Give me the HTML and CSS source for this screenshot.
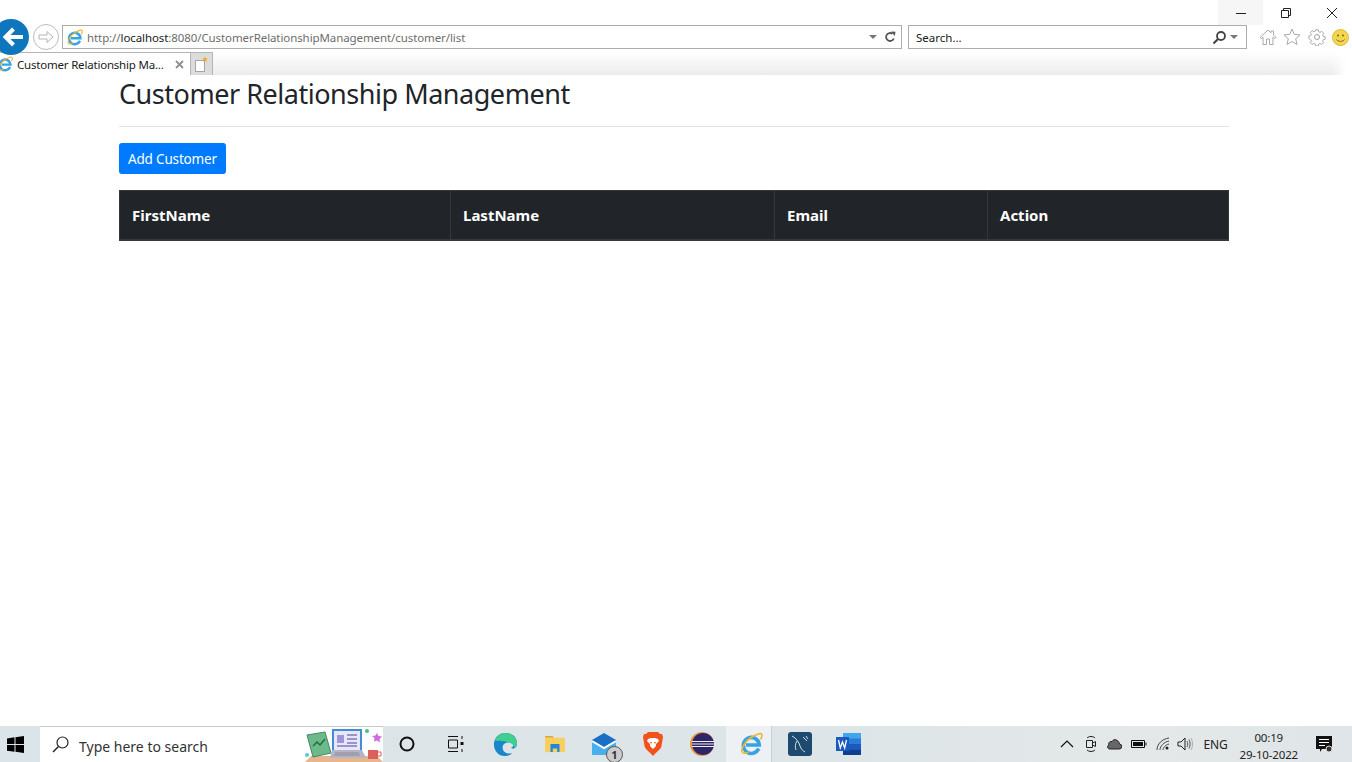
FILE: index.html
```html
<!DOCTYPE html>
<html lang="en">
<head>
    <meta charset="UTF-8">
    <meta name="viewport" content="width=device-width, initial-scale=1.0">
    <title>Customer Relationship Management</title>
    <link rel="stylesheet" href="styles.css">
</head>
<body>
    <svg class="defs" width="0" height="0">
        <symbol id="ie" viewBox="0 0 24 24">
            <path d="M19.700 16.500a8 8 0 1 1 .6-3.500H7" stroke="#37a3e4" stroke-width="3.600" fill="none"/>
            <path d="M3.500 20.500C1 18 6 9 12 5.500S22 .5 22.800 2.500c.5 1.500-.3 3.500-1.300 5" stroke="#f0b62e" stroke-width="1.600" fill="none"/>
            <path d="M3.500 20.500c1 1 3.500.8 6-.5" stroke="#f0b62e" stroke-width="1.600" fill="none"/>
        </symbol>
    </svg>

    <header class="browser">
        <div class="title-row">
            <div class="win-btn win-hover">
                <svg width="12" height="12" viewBox="0 0 12 12"><path d="M1 6.500h10" stroke="#222" fill="none"/></svg>
            </div>
            <div class="win-btn">
                <svg width="12" height="12" viewBox="0 0 12 12"><path d="M1.500 3.500h7v7h-7z M3.500 3.500v-2h7v7h-2" stroke="#222" fill="none"/></svg>
            </div>
            <div class="win-btn win-close">
                <svg width="12" height="12" viewBox="0 0 12 12"><path d="M1 1l10 10M11 1L1 11" stroke="#222" fill="none"/></svg>
            </div>
        </div>

        <div class="back-btn">
            <svg width="24" height="22" viewBox="0 0 24 22"><path d="M21 11H4M11.500 3L3.500 11l8 8" stroke="#fff" stroke-width="4" fill="none"/></svg>
        </div>
        <div class="forward-btn">
            <svg width="16" height="14" viewBox="0 0 16 14"><path d="M1 5h8V1.500L15 7l-6 5.500V9H1z" stroke="#b4b4b4" fill="none"/></svg>
        </div>

        <div class="address-row">
            <div class="address-bar">
                <svg class="ie-small" width="17" height="17"><use href="#ie"/></svg>
                <span class="url">http://<b>localhost</b>:8080/CustomerRelationshipManagement/customer/list</span>
                <span class="caret"></span>
                <svg class="refresh" width="12" height="12" viewBox="0 0 12 12"><path d="M9.800 7.500A4 4 0 1 1 8.500 2.800" stroke="#555" stroke-width="1.800" fill="none"/><path d="M7 .5l4.500.3-.7 4.300z" fill="#555"/></svg>
            </div>
            <div class="search-bar">
                <span class="search-text">Search...</span>
                <svg width="15" height="15" viewBox="0 0 15 15"><circle cx="9" cy="6" r="4" stroke="#444" stroke-width="1.800" fill="none"/><path d="M6 9l-4.500 4.500" stroke="#444" stroke-width="2.200"/></svg>
                <span class="caret"></span>
            </div>
            <div class="tools">
                <svg width="18" height="18" viewBox="0 0 18 18"><path d="M1 9.500L9 2l3 2.800V3h2.500v4l2.500 2.500-1.500 1L14 9v7.500h-3.500V11h-3v5.500H4V9l-1.500 1.500z" stroke="#a9a9a9" fill="#fff"/></svg>
                <svg width="18" height="18" viewBox="0 0 18 18"><path d="M9 1l2.300 5.400 5.700.5-4.300 3.800 1.300 5.800L9 13.500l-5 3 1.300-5.800L1 6.900l5.700-.5z" stroke="#a9a9a9" fill="#fff"/></svg>
                <svg class="tool-gear" width="18" height="18" viewBox="0 0 18 18"><circle cx="9" cy="9" r="2.500" stroke="#a0a0a0" fill="none"/><path d="M7.500 1h3l.4 2.200 1.500.7 2-1.200 2 2.100-1.200 1.900.7 1.500 2.100.4v2.800l-2.100.5-.7 1.500 1.200 1.900-2 2-2-1.200-1.500.7-.4 2.200h-3l-.4-2.200-1.500-.7-2 1.200-2-2 1.200-1.900-.7-1.500L0 10.600V7.800l2.100-.4.700-1.500-1.200-1.900 2-2.100 2 1.200 1.500-.7z" transform="translate(.9 .9) scale(.9)" stroke="#a0a0a0" fill="none"/></svg>
                <svg width="17" height="17" viewBox="0 0 17 17"><circle cx="8.500" cy="8.500" r="8" fill="#f3d54e" stroke="#d9b93c"/><circle cx="6" cy="6.500" r="1" fill="#7a6a20"/><circle cx="11" cy="6.500" r="1" fill="#7a6a20"/><path d="M4.500 10.500c1.500 2.500 6.500 2.500 8 0" stroke="#7a6a20" fill="none"/></svg>
            </div>
        </div>

        <div class="tab-row">
            <div class="tab">
                <svg class="ie-tab" width="16" height="16"><use href="#ie"/></svg>
                <span class="tab-title">Customer Relationship Ma...</span>
                <svg class="tab-close" width="9" height="9" viewBox="0 0 9 9"><path d="M1 1l7 7M8 1L1 8" stroke="#8f8f8f" stroke-width="1.800"/></svg>
            </div>
            <div class="new-tab">
                <svg width="15" height="17" viewBox="0 0 15 17"><path d="M1.500 4.500h9v11h-9z" fill="#fff" stroke="#a5a5a5"/><path d="M11 .5l.8 1.800 1.900.2-1.400 1.300.4 1.900-1.700-1-1.700 1 .4-1.900L8.300 2.500l1.900-.2z" fill="#f5a623"/></svg>
            </div>
        </div>
    </header>

    <main class="page">
        <h3 class="page-title">Customer Relationship Management</h3>
        <hr class="divider">
        <a class="btn-add">Add Customer</a>
        <table class="customers">
            <thead>
                <tr>
                    <th class="col-first">FirstName</th>
                    <th class="col-last">LastName</th>
                    <th class="col-email">Email</th>
                    <th class="col-action">Action</th>
                </tr>
            </thead>
        </table>
    </main>

    <footer class="taskbar">
        <div class="start">
            <svg width="17" height="17" viewBox="0 0 17 17"><path d="M0 2.400l7.500-1.100v6.800H0z M8.500 1.200L17 0v8.100H8.500z M0 9.100h7.500v6.700L0 14.700z M8.500 9.100H17V17l-8.500-1.200z" fill="#000"/></svg>
        </div>
        <div class="task-search">
            <svg class="search-glass" width="17" height="17" viewBox="0 0 17 17"><circle cx="10.500" cy="6.500" r="5.500" stroke="#222" stroke-width="1.200" fill="none"/><path d="M6.500 10.500L1 16" stroke="#222" stroke-width="1.400"/></svg>
            <span class="task-search-text">Type here to search</span>
            <svg class="search-art" width="78" height="35" viewBox="0 0 78 35">
                <path d="M0 35l6-6h66l6 6z" fill="#e6b78f"/>
                <path d="M2 8l18-3 6 21-18 4z" fill="#6eb98a" stroke="#3f8a63"/>
                <path d="M8 19l4-4 3 3 5-6" stroke="#1f6e3e" stroke-width="1.500" fill="none"/>
                <path d="M27 2h30v21H27z" fill="#3f8fd8"/>
                <path d="M29 4h26v19H29z" fill="#e8e6f7"/>
                <path d="M32 8h7v8h-7z" fill="#9c97d8"/>
                <path d="M42 8h10M42 12h10M42 16h10M32 19h20" stroke="#7f7bc4" stroke-width="1.500"/>
                <path d="M27 23h30l4 8H25z" fill="#b4b4c4"/>
                <path d="M30 26h24M29 28h26" stroke="#8b8b9c"/>
                <path d="M63 23h10v9H63z" fill="#d9605c"/>
                <path d="M73 25h3v4h-3" stroke="#d9605c" fill="none"/>
                <circle cx="62" cy="4" r="2" fill="#43c47a"/>
                <path d="M72 6l1.500 3 3.500.5-2.500 2.500.5 3.500-3-2-3 1 .5-3.500-2.500-2 3.500-.5z" fill="#d06be0"/>
                <circle cx="2" cy="28" r="2" fill="#59c6d8"/>
            </svg>
        </div>

        <div class="task-icons">
            <div class="task-icon task-cortana">
                <svg width="16" height="16" viewBox="0 0 16 16"><circle cx="8" cy="8" r="6.500" stroke="#111" stroke-width="2" fill="none"/></svg>
            </div>
            <div class="task-icon task-view">
                <svg width="18" height="18" viewBox="0 0 18 18"><path d="M2 1.500h10M2 16.500h10M2.500 5h9v8h-9zM16 1v3M16 14v3" stroke="#111" fill="none"/><path d="M14.500 7h3v3h-3z" fill="#111"/></svg>
            </div>
            <div class="task-icon">
                <svg width="25" height="25" viewBox="0 0 26 26">
                    <path d="M13 1C6 1 1 6 1 13c0 7 5 12 11 12 3 0 6-1 8-3-5 1-10-1-10-6 0-3 3-5 6-5 3 0 5 1 5 3 0 1-1 2-2 2 0 2 6 2 6-4C25 5 20 1 13 1z" fill="#1b86c9"/>
                    <path d="M2 9C4 4 8 1 13 1c7 0 12 5 12 11 0 2-1 4-3 5 1-2-1-4-3-5-5-3-13-3-17-3z" fill="#3fcf8e"/>
                </svg>
            </div>
            <div class="task-icon">
                <svg width="22" height="18" viewBox="0 0 24 20"><path d="M1 1h8l2 2H1z" fill="#d9a72e"/><path d="M1 3h22v16H1z" fill="#f8cf5c"/><path d="M7 10h10v9h-2.500v-4h-5v4H7z" fill="#1f88d8"/></svg>
            </div>
            <div class="task-icon task-mail">
                <svg width="24" height="22" viewBox="0 0 24 22"><path d="M0 7l12-7 12 7v15H0z" fill="#1a6fc4"/><path d="M0 9l12 7 12-7v13H0z" fill="#46b0ee"/><path d="M0 8l12 7 12-7" stroke="#fff" stroke-width="2" fill="none"/></svg>
                <span class="mail-badge">1</span>
            </div>
            <div class="task-icon">
                <svg width="20" height="24" viewBox="0 0 20 24"><path d="M5 0h10l2 2h2l1 3-1.500 9c-.5 3-6 7-8.500 10-2.500-3-8-7-8.500-10L0 5l1-3h2z" fill="#f1511b"/><path d="M5 7l3-1h4l3 1 1 2-3 3v2l-3 3-3-3v-2L4 9z" fill="#fff"/><path d="M7 10h2l-1 2zM13 10h-2l1 2z" fill="#f1511b"/></svg>
            </div>
            <div class="task-icon">
                <svg width="24" height="24" viewBox="0 0 24 24"><circle cx="12" cy="12" r="12" fill="#e8963a"/><circle cx="13" cy="12" r="11" fill="#2f2569"/><path d="M2 9.500h22M2 12h22M2 14.500h22" stroke="#eee" stroke-width="1.200"/></svg>
            </div>
            <div class="task-icon task-active">
                <svg width="24" height="24"><use href="#ie"/></svg>
            </div>
            <div class="task-sep"></div>
            <div class="task-icon">
                <svg width="24" height="24" viewBox="0 0 24 24"><rect width="24" height="24" rx="3" fill="#1d4a6e"/><path d="M4 4c4 2 7 6 8 10 1 3 3 5 5 6M9 9c-2 3-2 6-1 9M18 4l2 3M15 5l4 4" stroke="#d5e2ea" fill="none"/></svg>
            </div>
            <div class="task-icon">
                <svg width="25" height="22" viewBox="0 0 25 22"><path d="M7 0h18v22H7z" fill="#2b7cd3"/><path d="M7 0h18v5.500H7z" fill="#41a5ee"/><path d="M7 11h18v5.500H7z" fill="#185abd"/><path d="M7 16.500h18V22H7z" fill="#103f91"/><path d="M0 4h13v14H0z" fill="#185abd"/><path d="M2.500 7l1.800 8L6.500 9l2.200 6 1.800-8" stroke="#fff" stroke-width="1.300" fill="none"/></svg>
            </div>
        </div>

        <div class="tray">
            <svg class="tray-chevron" width="14" height="8" viewBox="0 0 14 8"><path d="M1 7l6-6 6 6" stroke="#111" stroke-width="1.200" fill="none"/></svg>
            <svg class="tray-meet" width="12" height="18" viewBox="0 0 12 18"><path d="M2 3c2-2 6-2 8 0M2 15c2 2 6 2 8 0" stroke="#222" fill="none"/><path d="M1.500 5.500h6v7h-6zM7.500 8l3-1.500v5l-3-1.500" stroke="#222" fill="none"/></svg>
            <svg class="tray-cloud" width="16" height="12" viewBox="0 0 16 12"><path d="M4 11h9a2.500 2.500 0 0 0 .5-5C13 2 8 0 6 3.500 3 3 2 6 3 7c-2 .5-2 4 1 4z" fill="#666" stroke="#222"/></svg>
            <svg class="tray-battery" width="16" height="10" viewBox="0 0 16 10"><path d="M.5 1.500h13v7H.5z" stroke="#111" fill="none"/><path d="M2 3h10v4H2z" fill="#111"/><path d="M14.500 3.500h1v3h-1z" fill="#111"/></svg>
            <svg class="tray-wifi" width="14" height="14" viewBox="0 0 14 14"><path d="M1 13C1 7 6 2 13 1M4 13c0-4 4-8 9-9M7 13c0-2 2-5 6-6" stroke="#444" fill="none"/><circle cx="11" cy="11" r="1.500" fill="#222"/></svg>
            <svg class="tray-volume" width="16" height="14" viewBox="0 0 16 14"><path d="M1 5h3l4-4v12L4 9H1z" stroke="#222" fill="none"/><path d="M10 4c1 2 1 4 0 6M12 2.500c1.500 3 1.500 6 0 9" stroke="#555" fill="none"/><path d="M14 1c2 4 2 8 0 12" stroke="#aaa" fill="none"/></svg>
            <span class="tray-lang">ENG</span>
            <div class="tray-clock">
                <span>00:19</span>
                <span>29-10-2022</span>
            </div>
            <svg class="tray-notify" width="17" height="17" viewBox="0 0 17 17"><path d="M0 0h16v13H6l-2 3v-3H0z" fill="#111"/><path d="M3 3.500h10M3 6.500h10M3 9.500h6" stroke="#fff"/><circle cx="13" cy="13" r="3" fill="#333" stroke="#ddd"/></svg>
        </div>
    </footer>
</body>
</html>
```

FILE: styles.css
```css
* {
    box-sizing: border-box;
}

html, body {
    height: 100%;
}

body {
    margin: 0;
    display: flex;
    flex-direction: column;
    overflow: hidden;
    background: #fff;
    color: #212529;
    font-family: "Noto Sans", "Open Sans", sans-serif;
}

.defs {
    position: absolute;
}

/* browser chrome */
.browser {
    position: relative;
    height: 75px;
    flex-shrink: 0;
    font-size: 12px;
}

.title-row {
    display: flex;
    justify-content: flex-end;
    height: 25px;
}

.win-btn {
    display: flex;
    align-items: center;
    justify-content: center;
    width: 46px;
    height: 25px;
}

.win-hover {
    width: 45px;
    background: #f6f6f6;
}

.win-close {
    width: 43px;
    padding-left: 3px;
}

.back-btn {
    position: absolute;
    left: -7px;
    top: 19px;
    width: 36px;
    height: 36px;
    padding-left: 5px;
    display: flex;
    align-items: center;
    justify-content: center;
    border-radius: 50%;
    background: #0e76bc;
    z-index: 2;
}

.forward-btn {
    position: absolute;
    left: 33px;
    top: 24px;
    width: 26px;
    height: 26px;
    display: flex;
    align-items: center;
    justify-content: center;
    border-radius: 50%;
    border: 1px solid #bdbdbd;
    background: #fff;
}

.address-row {
    display: flex;
    align-items: center;
    height: 24px;
    padding-left: 62px;
}

.address-bar {
    display: flex;
    align-items: center;
    width: 840px;
    height: 24px;
    padding: 0 5px 0 3px;
    border: 1px solid #adadad;
    background: #fff;
}

.ie-small {
    flex-shrink: 0;
    margin-right: 4px;
}

.url {
    flex: 1;
    color: #6d6d6d;
    font-size: 11.5px;
    letter-spacing: -0.09px;
    white-space: nowrap;
}

.url b {
    font-weight: 400;
    color: #1a1a1a;
}

.caret {
    width: 0;
    height: 0;
    margin: 0 6px;
    border-left: 4px solid transparent;
    border-right: 4px solid transparent;
    border-top: 4px solid #777;
}

.refresh {
    margin-left: 1px;
}

.search-bar {
    display: flex;
    align-items: center;
    width: 339px;
    height: 24px;
    margin-left: 6px;
    padding-left: 7px;
    border: 1px solid #adadad;
    background: #fff;
}

.search-text {
    flex: 1;
    color: #1a1a1a;
    font-size: 11.5px;
}

.search-bar .caret {
    margin: 0 8px 0 3px;
}

.tools {
    display: flex;
    align-items: center;
    gap: 6px;
    margin-left: 12px;
}

.tool-gear {
    margin: 0 0 0 1px;
}

.tab-row {
    display: flex;
    height: 23px;
    margin-top: 3px;
    background:
        linear-gradient(90deg, transparent 1332px, #fff 1346px),
        linear-gradient(#fff, #ececec);
}

.tab {
    display: flex;
    align-items: center;
    width: 191px;
    border-top: 1px solid #b5b5b5;
    border-right: 1px solid #b5b5b5;
    background: #fff;
    overflow: hidden;
}

.ie-tab {
    flex-shrink: 0;
    margin-left: -3px;
    margin-right: 4px;
}

.tab-title {
    flex: 1;
    color: #1a1a1a;
    font-size: 11.5px;
    letter-spacing: -0.2px;
    white-space: nowrap;
}

.tab-close {
    margin-right: 6px;
}

.new-tab {
    display: flex;
    align-items: center;
    justify-content: center;
    width: 22px;
    border-top: 1px solid #b5b5b5;
    border-right: 1px solid #b5b5b5;
    background: #dcdcdc;
}

/* page content */
.page {
    flex: 1;
    width: 1110px;
    margin-left: 119px;
}

.page-title {
    margin: 2px 0 15px;
    font-size: 27px;
    font-weight: 400;
    letter-spacing: -0.47px;
    line-height: 34px;
}

.divider {
    margin: 0 0 16px;
    border: 0;
    border-top: 1px solid #e2e4e6;
}

.btn-add {
    display: inline-block;
    height: 31px;
    padding: 1px 9px 0;
    border-radius: 3px;
    background: #007bff;
    color: #fff;
    font-size: 13.5px;
    letter-spacing: -0.17px;
    line-height: 31px;
}

.customers {
    width: 100%;
    margin-top: 16px;
    border-collapse: collapse;
    table-layout: fixed;
}

.customers th {
    height: 49px;
    padding: 0 12px;
    border: 1px solid #32383e;
    border-bottom-width: 2px;
    background: #212529;
    color: #fff;
    font-size: 15px;
    font-weight: 700;
    text-align: left;
}

.col-first {
    width: 331px;
}

.col-last {
    width: 324px;
}

.col-email {
    width: 213px;
}

/* windows taskbar */
.taskbar {
    display: flex;
    height: 36px;
    flex-shrink: 0;
    background: linear-gradient(90deg, #dbe4e8, #dde5e8 60%, #e4e8e8 85%, #dfe5e8);
}

.start {
    display: flex;
    align-items: center;
    justify-content: center;
    width: 40px;
    padding-right: 10px;
}

.task-search {
    display: flex;
    align-items: center;
    width: 343px;
    padding-left: 12px;
    border-top: 1px solid #c9c9c9;
    background: #fff;
    position: relative;
}

.search-glass {
    margin-right: 10px;
}

.task-search-text {
    flex: 1;
    padding-top: 3px;
    color: #333;
    font-size: 14px;
}

.search-art {
    position: absolute;
    right: 0;
    top: 0;
}

.task-icons {
    display: flex;
    align-items: center;
    height: 100%;
}

.task-icon {
    position: relative;
    display: flex;
    align-items: center;
    justify-content: center;
    width: 49px;
    height: 100%;
}

.task-cortana {
    padding-right: 2px;
}

.task-view {
    padding-right: 3px;
}

.task-active {
    width: 45px;
    padding-left: 5px;
    background: #eef1f3;
}

.task-sep {
    width: 1px;
    height: 100%;
    background: #c6cdd0;
    margin-right: 3px;
}

.mail-badge {
    position: absolute;
    right: 5px;
    bottom: -1px;
    width: 17px;
    height: 17px;
    border: 1px solid #555;
    border-radius: 50%;
    background: #ccc;
    font-size: 11px;
    font-weight: 700;
    line-height: 15px;
    text-align: center;
    color: #333;
}

.tray {
    display: flex;
    align-items: center;
    margin-left: auto;
    padding-right: 19px;
    color: #222;
    font-size: 12px;
}

.tray-chevron {
    margin-right: 11px;
}

.tray-meet {
    margin-right: 9px;
}

.tray-cloud {
    margin-right: 9px;
}

.tray-battery {
    margin-right: 9px;
}

.tray-wifi {
    margin-right: 7px;
}

.tray-volume {
    margin-right: 11px;
}

.tray-lang {
    padding-top: 1px;
    letter-spacing: -0.2px;
}

.tray-clock {
    display: flex;
    flex-direction: column;
    align-items: center;
    margin: 0 18px 0 12px;
    padding-top: 4px;
    font-size: 11.5px;
    letter-spacing: -0.15px;
    line-height: 17px;
}
```
